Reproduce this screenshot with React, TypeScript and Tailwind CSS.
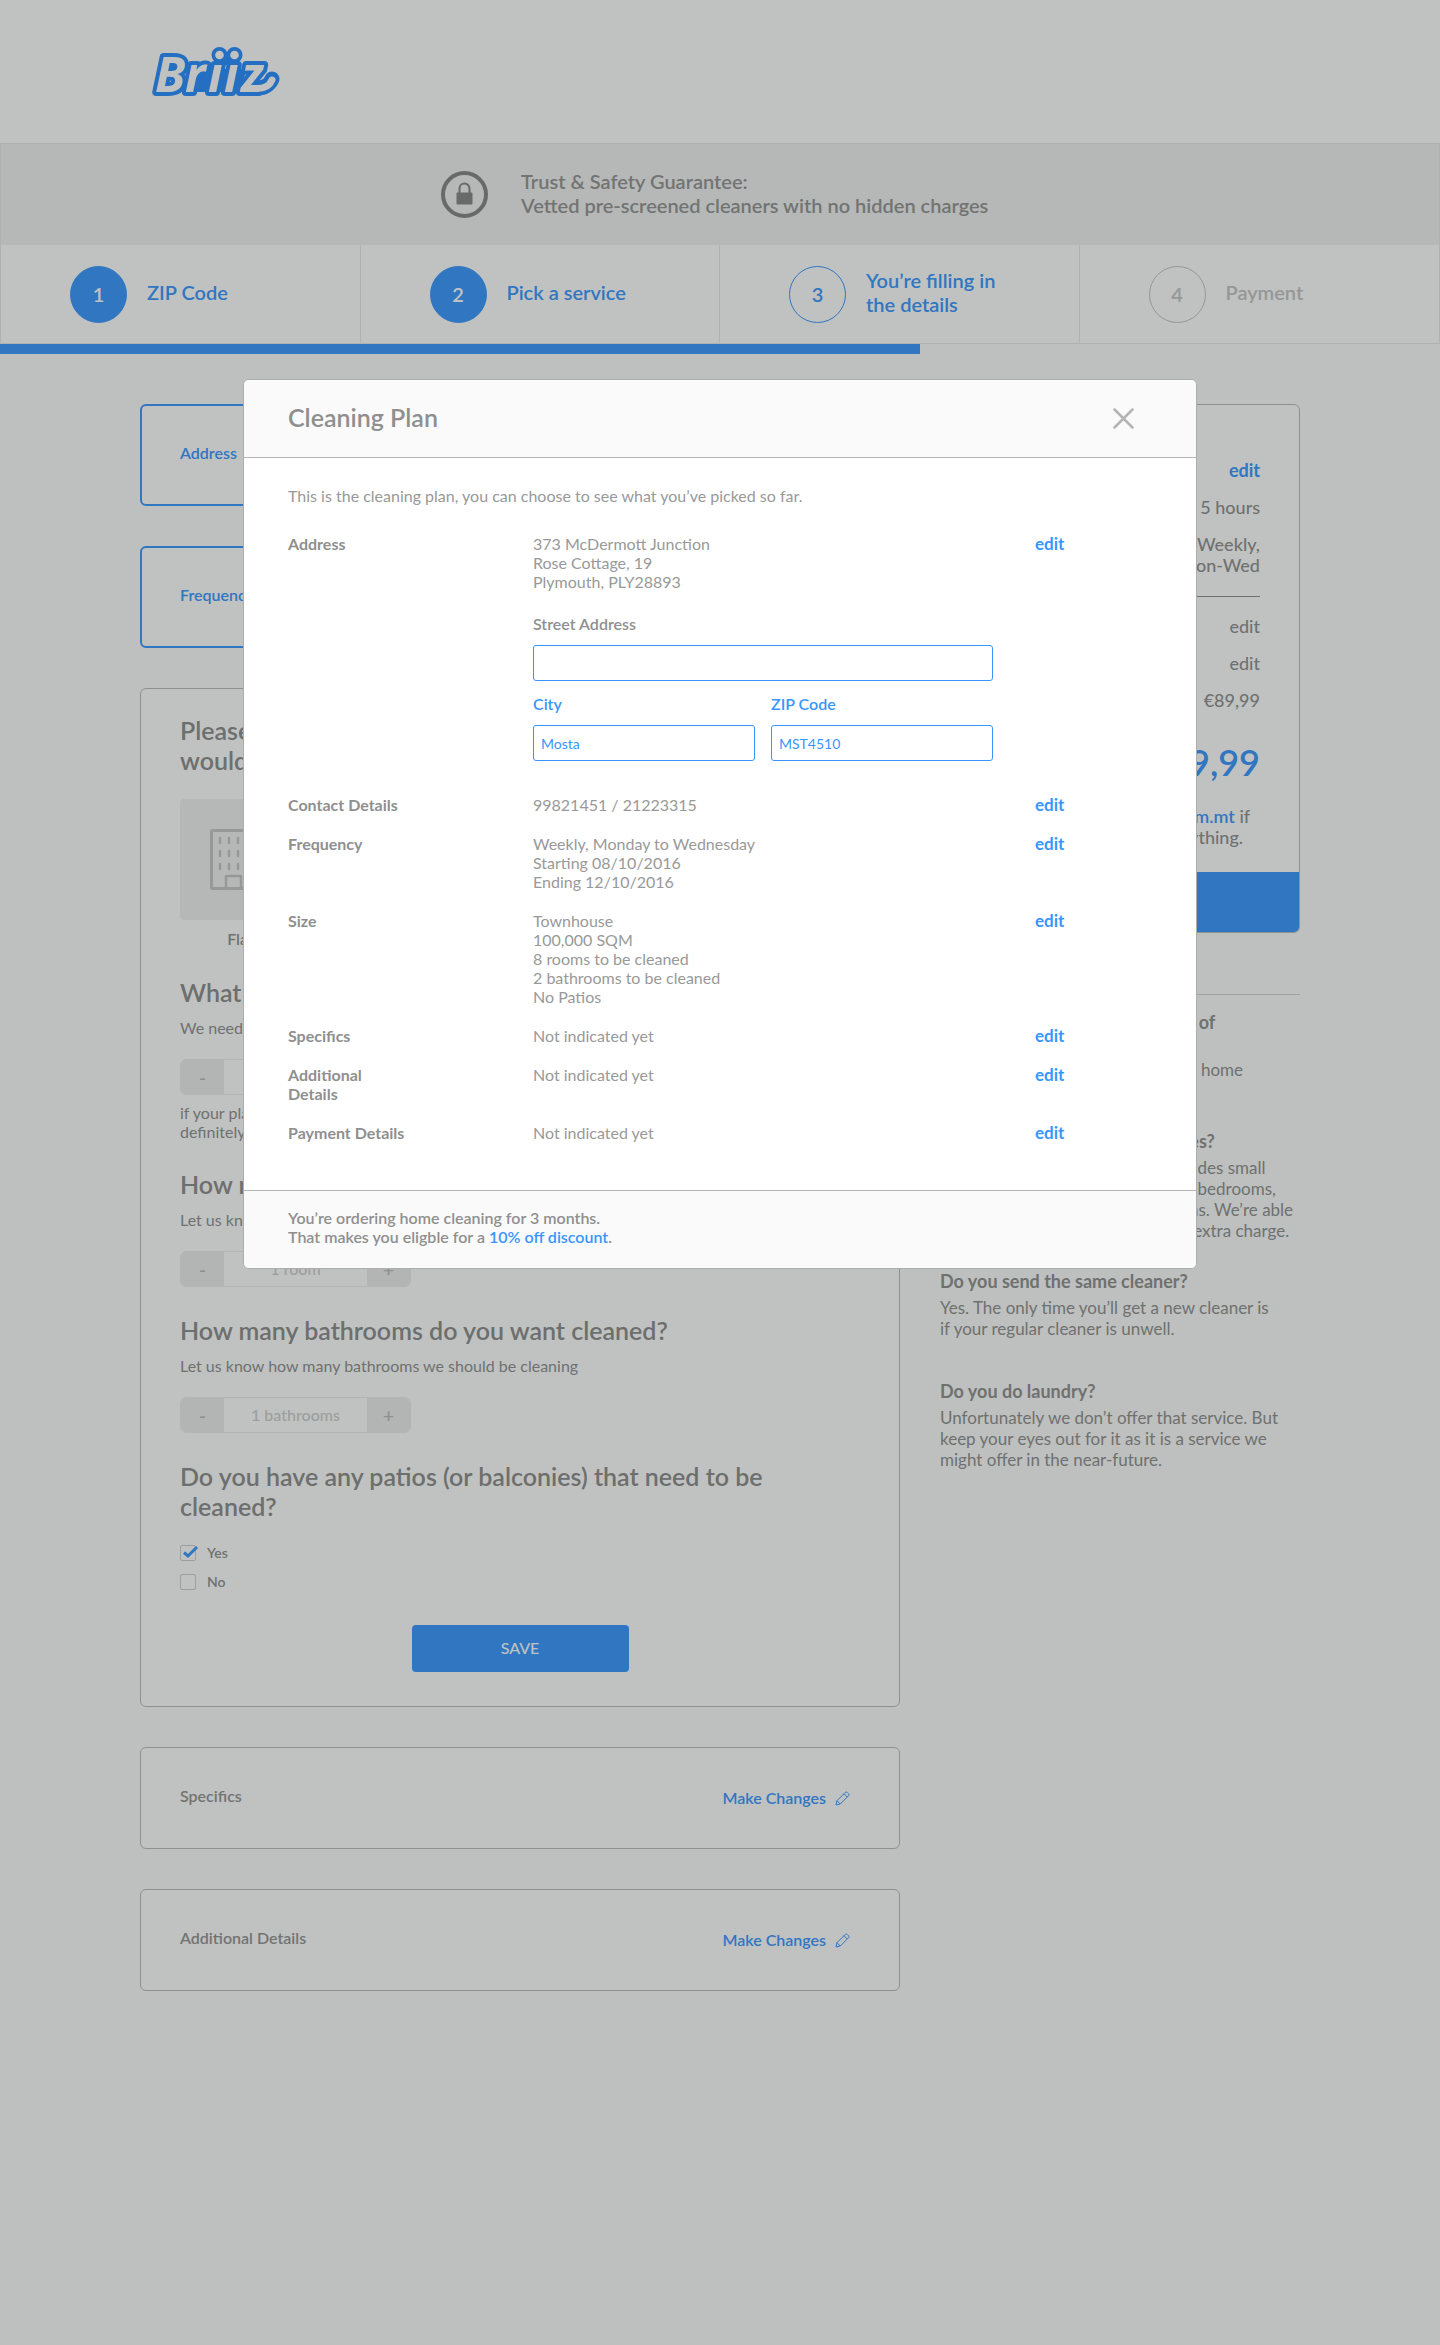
import React from "react";

const BLUE = "#3896ff";

function Logo() {
  return (
    <svg width="170" height="90" viewBox="0 0 170 90" role="img" aria-label="Briiz">
      <g stroke="#288cff" fill="none" strokeLinejoin="round" strokeLinecap="round">
        <path d="M116 58H127C135 58 140 54 142 49" strokeWidth="15" />
        <path d="M62 57H122M64 50H110M64 44H110M94 30L100 30" strokeWidth="10" />
        <circle cx="89.500" cy="25" r="4.500" strokeWidth="7" />
        <circle cx="104.500" cy="25" r="4.500" strokeWidth="7" />
      </g>
      <text
        x="25 55 78 94 111"
        y="62"
        fontFamily="'Open Sans', sans-serif"
        fontWeight="700"
        fontStyle="italic"
        fontSize="49"
        fill="#fff"
        stroke="#288cff"
        strokeWidth="8"
        strokeLinejoin="round"
        paintOrder="stroke"
      >
        Brıız
      </text>
      <circle cx="89.500" cy="25" r="4.300" fill="#fff" />
      <circle cx="104.500" cy="25" r="4.300" fill="#fff" />
      <path d="M120 58.500H127C135 58.500 140 55 142 50" fill="none" stroke="#fff" strokeWidth="7" strokeLinecap="round" />
    </svg>
  );
}

function LockIcon() {
  return (
    <svg width="47" height="47" viewBox="0 0 47 47" fill="none" aria-hidden="true" className="shrink-0">
      <circle cx="23.500" cy="23.500" r="21.500" stroke="#868686" strokeWidth="4" />
      <rect x="15.500" y="21.500" width="16" height="12" rx="1" fill="#868686" />
      <path d="M18.500 22v-4.500a5 5 0 0 1 10 0V22" stroke="#868686" strokeWidth="2" />
    </svg>
  );
}

function Pencil() {
  return (
    <svg width="15" height="15" viewBox="0 0 15 15" fill="none" stroke={BLUE} strokeLinejoin="round" aria-hidden="true">
      <path d="M1 14l1-4.300L10.300 1.400a1.300 1.300 0 0 1 1.900 0l1.400 1.400a1.300 1.300 0 0 1 0 1.900L5.300 13z" />
      <path d="M2 9.700L5.300 13M9 2.700L12.300 6" />
    </svg>
  );
}

function Building() {
  const rows = [11, 24, 37];
  const cols = [10, 19, 28, 37, 46, 53];
  return (
    <svg width="62" height="62" viewBox="0 0 62 62" fill="none" stroke="#c6c6c6" strokeLinejoin="round" strokeLinecap="round" aria-hidden="true">
      <rect x="1.500" y="1.500" width="59" height="58" rx="1" strokeWidth="3" />
      {rows.map((y) => cols.map((x) => <path key={`${x}-${y}`} d={`M${x} ${y - 2}v5`} strokeWidth="2.500" />))}
      <path d="M16 59V47h15v12" strokeWidth="2.500" />
    </svg>
  );
}

const steps = [
  { n: 1, label: "ZIP Code", state: "done" },
  { n: 2, label: "Pick a service", state: "done" },
  { n: 3, label: "You’re filling in the details", state: "current" },
  { n: 4, label: "Payment", state: "todo" },
];

const circleStyle: Record<string, string> = {
  done: "border-[#3896ff] bg-[#3896ff] text-white",
  current: "border-[#3896ff] text-[#3896ff]",
  todo: "border-[#c4c4c4] text-[#c4c4c4]",
};
const labelStyle: Record<string, string> = {
  done: "text-[#3896ff]",
  current: "text-[#3896ff]",
  todo: "text-[#c4c4c4]",
};

function Steps() {
  return (
    <>
      <ol className="grid grid-cols-4 border-x border-b border-[#e9e9e9] bg-white">
        {steps.map((s) => (
          <li
            key={s.n}
            className="flex h-[98px] items-center gap-5 border-r border-[#e9e9e9] pl-[69px] text-[20px] leading-6 font-semibold last:border-r-0"
          >
            <span className={`flex size-[57px] shrink-0 items-center justify-center rounded-full border ${circleStyle[s.state]}`}>{s.n}</span>
            <span className={`max-w-[140px] pb-1 ${labelStyle[s.state]}`}>{s.label}</span>
          </li>
        ))}
      </ol>
      <div className="h-[10px] w-[63.9%] bg-[#3896ff]" role="progressbar" aria-label="Booking progress" aria-valuenow={64} />
    </>
  );
}

function ActiveCard({ title }: { title: string }) {
  return (
    <section className="flex h-[102px] items-center rounded-md border-2 border-[#3896ff] bg-white px-[38px]">
      <h2 className="pb-1 text-[16px] leading-5 font-semibold text-[#3896ff]">{title}</h2>
    </section>
  );
}

function ClosedCard({ title }: { title: string }) {
  return (
    <section className="flex h-[102px] items-center justify-between rounded-md border border-[#bcbcbc] bg-white pr-[49px] pl-[39px]">
      <h2 className="pb-1 text-[16px] leading-5 font-semibold text-[#939393]">{title}</h2>
      <button type="button" className="flex items-center gap-[9px] text-[16px] leading-5 font-semibold text-[#3896ff]">
        Make Changes
        <Pencil />
      </button>
    </section>
  );
}

function Stepper({ label, value }: { label: string; value: string }) {
  return (
    <div className="mt-[21px] flex h-9 w-[231px] overflow-hidden rounded-md border border-[#eeeeee] text-[16px] font-medium">
      <button type="button" aria-label={`Less: ${label}`} className="w-[43px] bg-[#eeeeee] text-[20px] leading-8 text-[#bcbcbc]">
        -
      </button>
      <input aria-label={label} defaultValue={value} className="min-w-0 flex-1 bg-white text-center text-[#cecece] outline-none" />
      <button type="button" aria-label={`More: ${label}`} className="w-[43px] bg-[#eeeeee] text-[20px] leading-8 text-[#bcbcbc]">
        +
      </button>
    </div>
  );
}

function Heading({ children }: { children: React.ReactNode }) {
  return <h3 className="text-[25px] leading-[30px] font-semibold text-[#8c8c8c]">{children}</h3>;
}

function Hint({ children }: { children: React.ReactNode }) {
  return <p className="mt-[11px] text-[16px] leading-5 text-[#8f8f8f]">{children}</p>;
}

function Check({ label, checked }: { label: string; checked?: boolean }) {
  return (
    <label className="flex h-4 items-center gap-[11px] text-[14px] leading-4 font-semibold text-[#8f8f8f]">
      <span className="relative size-4">
        <input type="checkbox" defaultChecked={checked} className="peer block size-4 appearance-none rounded-[2px] border border-[#cfcfcf]" />
        <svg
          width="18"
          height="16"
          viewBox="0 0 18 16"
          fill="none"
          stroke={BLUE}
          strokeWidth="3"
          aria-hidden="true"
          className="pointer-events-none absolute top-0 left-0 hidden peer-checked:block"
        >
          <path d="M4 7.500l4 3.500L17 2" />
        </svg>
      </span>
      {label}
    </label>
  );
}

function SizeForm() {
  return (
    <form className="flex flex-col gap-7 rounded-md border border-[#bcbcbc] bg-white px-[39px] pt-[26px] pb-[34px]" onSubmit={(e) => e.preventDefault()}>
      <div>
        <Heading>
          Please tell
          <br />
          would you
        </Heading>
        <button type="button" className="mt-6 block w-[121px] text-center">
          <span className="flex h-[121px] items-center justify-center rounded-[4px] bg-[#f2f1f3]">
            <Building />
          </span>
          <span className="mt-[9px] block text-[16px] leading-5 font-semibold text-[#8f8f8f]">Flat</span>
        </button>
      </div>
      <div>
        <Heading>What size?</Heading>
        <Hint>We need it</Hint>
        <Stepper label="Home size" value="1 SQM" />
        <p className="mt-2 text-[16px] leading-[19px] text-[#8f8f8f]">
          if your place
          <br />
          definitely
        </p>
      </div>
      <div>
        <Heading>How many</Heading>
        <Hint>Let us know</Hint>
        <Stepper label="Rooms" value="1 room" />
      </div>
      <div>
        <Heading>How many bathrooms do you want cleaned?</Heading>
        <Hint>Let us know how many bathrooms we should be cleaning</Hint>
        <Stepper label="Bathrooms" value="1 bathrooms" />
      </div>
      <div>
        <Heading>Do you have any patios (or balconies) that need to be cleaned?</Heading>
        <div className="mt-6 flex flex-col items-start gap-[13px]">
          <Check label="Yes" checked />
          <Check label="No" />
        </div>
        <button type="submit" className="mx-auto mt-[35px] block h-[47px] w-[217px] rounded-[4px] bg-[#3896ff] pb-px text-[16px] font-medium text-white">
          SAVE
        </button>
      </div>
    </form>
  );
}

function Summary() {
  return (
    <section className="overflow-hidden rounded-md border border-[#bcbcbc] bg-white text-[18px] leading-[21px] font-medium text-[#8f8f8f]">
      <div className="flex flex-col items-end gap-4 px-[39px] pt-[55px]">
        <a href="#plan" className="font-bold text-[#3896ff]">
          edit
        </a>
        <span>5 hours</span>
        <span className="text-right">
          Weekly,
          <br />
          Mon-Wed
        </span>
      </div>
      <div className="mx-[39px] mt-5 flex flex-col items-end gap-4 border-t border-[#8f8f8f] pt-[19px]">
        <a href="#extras">edit</a>
        <a href="#voucher">edit</a>
        <span>€89,99</span>
      </div>
      <p className="mx-[39px] mt-[31px] text-right text-[36px] leading-10 font-semibold text-[#3896ff]">€89,99</p>
      <p className="mt-6 text-center">
        Write to{" "}
        <a href="mailto:support@briiz.com.mt" className="font-semibold text-[#3896ff]">
          support@briiz.com.mt
        </a>{" "}
        if
        <br />
        you’d want to change anything.
      </p>
      <button type="button" aria-label="Order now" className="mt-6 block h-[60px] w-full bg-[#3896ff]" />
    </section>
  );
}

const faqs = [
  { q: ["What should happen on the day of", "cleaning?"], a: ["Our Briiz cleaner will arrive at your home", "on time."] },
  {
    q: ["Can you clean big or small houses?"],
    a: [
      "Our cleaning plan for a house includes small",
      "homes that have between 1 and 4 bedrooms,",
      "with kitchen and up to 2 bathrooms. We’re able",
      "to clean large homes as well at an extra charge.",
    ],
  },
  { q: ["Do you send the same cleaner?"], a: ["Yes. The only time you’ll get a new cleaner is", "if your regular cleaner is unwell."] },
  {
    q: ["Do you do laundry?"],
    a: ["Unfortunately we don’t offer that service. But", "keep your eyes out for it as it is a service we", "might offer in the near-future."],
  },
];

function Lines({ lines }: { lines: string[] }) {
  return (
    <>
      {lines.map((l) => (
        <span key={l} className="block">
          {l}
        </span>
      ))}
    </>
  );
}

function Faq() {
  return (
    <section className="mt-[61px] flex flex-col gap-[30px] border-t border-[#d4d4d4] pt-[17px] leading-[21px] text-[#8f8f8f]">
      {faqs.map((f) => (
        <div key={f.q[0]} className="last:mt-3">
          <h3 className="text-[18px] font-bold">
            <Lines lines={f.q} />
          </h3>
          <p className="mt-[5px] text-[17px]">
            <Lines lines={f.a} />
          </p>
        </div>
      ))}
    </section>
  );
}

function Row({ label, children }: { label: string; children: React.ReactNode }) {
  return (
    <div className="grid grid-cols-[245px_1fr_117px]">
      <dt className="max-w-[120px] font-bold text-[#8f8f8f]">{label}</dt>
      <dd>{children}</dd>
      <dd className="text-[17px] leading-[19px]">
        <a href={`#edit-${label}`} className="font-bold text-[#3896ff]">
          edit
        </a>
      </dd>
    </div>
  );
}

const field = "mt-3 block h-9 w-full rounded-[3px] border border-[#3896ff] bg-white px-[7px] text-[14px] text-[#3896ff] outline-none";

function AddressFields() {
  return (
    <div className="mt-[23px] mb-[14px] grid max-w-[460px] grid-cols-2 gap-x-4 gap-y-[13px] font-semibold text-[#3896ff]">
      <label className="col-span-2 text-[#8f8f8f]">
        Street Address
        <input type="text" className={field} />
      </label>
      <label>
        City
        <input type="text" defaultValue="Mosta" className={`${field} font-normal`} />
      </label>
      <label>
        ZIP Code
        <input type="text" defaultValue="MST4510" className={`${field} font-normal`} />
      </label>
    </div>
  );
}

function PlanDialog() {
  return (
    <div
      role="dialog"
      aria-modal="true"
      aria-labelledby="plan-title"
      className="w-full max-w-[954px] overflow-hidden rounded-md border border-[#adadad] bg-white text-[16px] leading-[19px] text-[#999999]"
    >
      <header className="flex h-[78px] items-center justify-between border-b border-[#b4b4b4] bg-[#fafafa] pr-[62px] pl-11">
        <h2 id="plan-title" className="pb-1 text-[25px] leading-[30px] font-semibold text-[#8f8f8f]">
          Cleaning Plan
        </h2>
        <button type="button" aria-label="Close">
          <svg width="21" height="21" viewBox="0 0 21 21" stroke="#b4b4b4" strokeWidth="2.500" strokeLinecap="round" aria-hidden="true">
            <path d="M1.500 1.500l18 18M19.500 1.500l-18 18" />
          </svg>
        </button>
      </header>
      <div className="px-11 pt-7 pb-12">
        <p className="leading-5">This is the cleaning plan, you can choose to see what you’ve picked so far.</p>
        <dl className="mt-7 flex flex-col gap-5">
          <Row label="Address">
            <Lines lines={["373 McDermott Junction", "Rose Cottage, 19", "Plymouth, PLY28893"]} />
            <AddressFields />
          </Row>
          <Row label="Contact Details">99821451 / 21223315</Row>
          <Row label="Frequency">
            <Lines lines={["Weekly, Monday to Wednesday", "Starting 08/10/2016", "Ending 12/10/2016"]} />
          </Row>
          <Row label="Size">
            <Lines lines={["Townhouse", "100,000 SQM", "8 rooms to be cleaned", "2 bathrooms to be cleaned", "No Patios"]} />
          </Row>
          <Row label="Specifics">Not indicated yet</Row>
          <Row label="Additional Details">Not indicated yet</Row>
          <Row label="Payment Details">Not indicated yet</Row>
        </dl>
      </div>
      <footer className="border-t border-[#b4b4b4] bg-[#fafafa] px-11 pt-[17px] pb-[22px] font-semibold text-[#8f8f8f]">
        You’re ordering home cleaning for 3 months.
        <br />
        That makes you eligble for a <a href="#discount" className="text-[#3896ff]">10% off discount</a>.
      </footer>
    </div>
  );
}

export default function App() {
  return (
    <div className="relative min-h-screen bg-[#fcfcfc] font-['Lato',sans-serif] antialiased">
      <header className="flex h-[143px] items-start bg-white pt-[30px] pl-[130px]">
        <Logo />
      </header>
      <div className="flex h-[102px] items-center border border-b-0 border-[#e8e8e8] bg-[#f1f1f1]">
        <div className="mx-auto flex w-full max-w-[558px] items-center gap-[33px]">
          <LockIcon />
          <p className="pb-1 text-[20px] leading-6 font-semibold text-[#939393]">
            Trust &amp; Safety Guarantee:
            <br />
            Vetted pre-screened cleaners with no hidden charges
          </p>
        </div>
      </div>
      <Steps />
      <main className="mx-auto grid max-w-[1160px] grid-cols-[19fr_9fr] items-start gap-10 pt-[50px] pb-20">
        <div className="flex flex-col gap-10">
          <ActiveCard title="Address" />
          <ActiveCard title="Frequency" />
          <SizeForm />
          <ClosedCard title="Specifics" />
          <ClosedCard title="Additional Details" />
        </div>
        <aside>
          <Summary />
          <Faq />
        </aside>
      </main>
      <div className="absolute inset-0 flex items-start justify-center bg-[#1e2522]/28 pt-[379px]">
        <PlanDialog />
      </div>
    </div>
  );
}
